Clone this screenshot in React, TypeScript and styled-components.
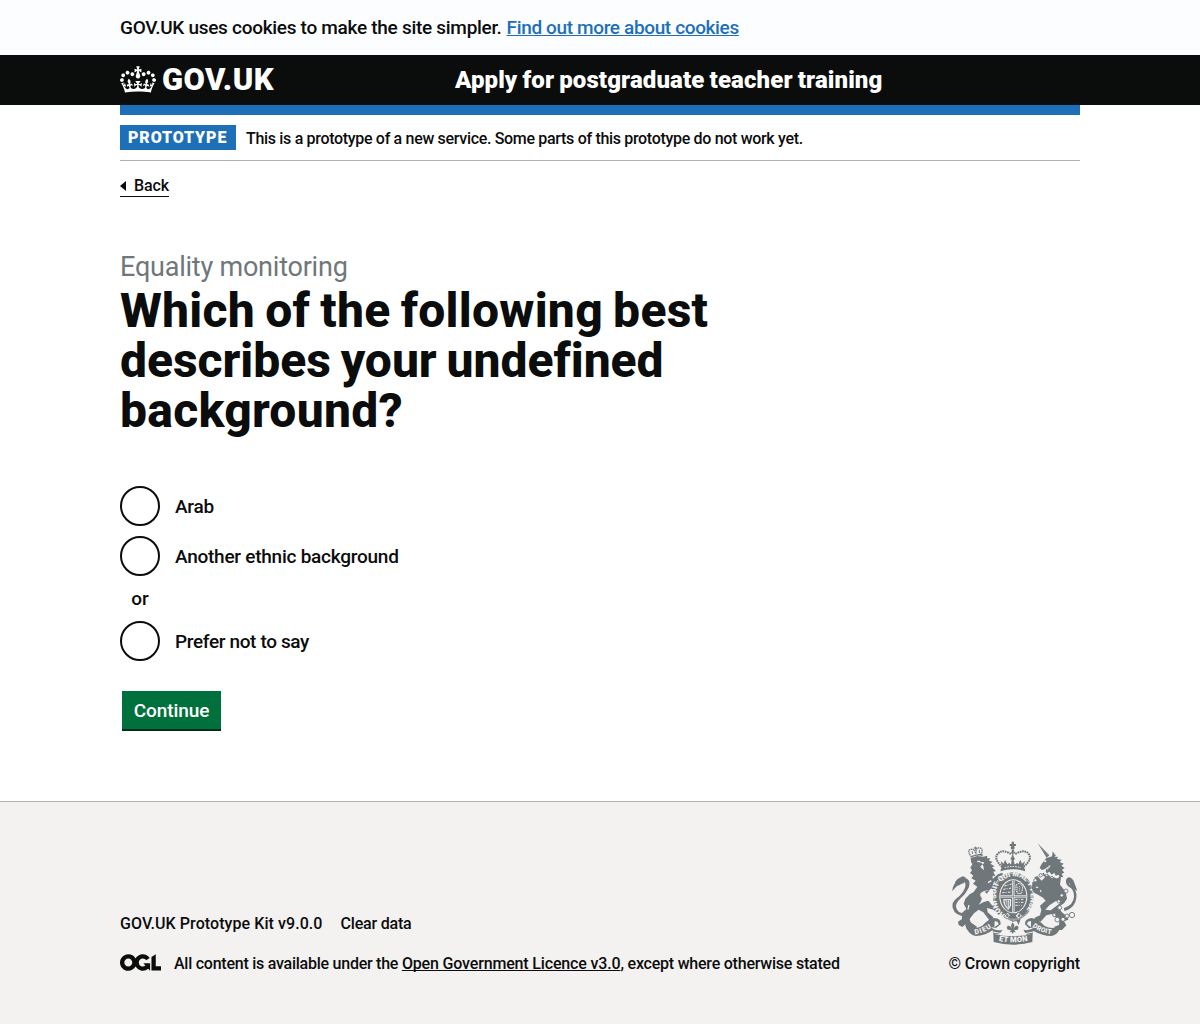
import React from "react";
import styled, { createGlobalStyle } from "styled-components";

const GlobalStyle = createGlobalStyle`
  * { box-sizing: border-box; }
  body {
    margin: 0;
    background: #f3f2f1;
    color: #0b0c0c;
    font-family: Roboto, "Liberation Sans", sans-serif;
    font-weight: 480;
  }
`;

const Page = styled.div`
  display: flex;
  flex-direction: column;
  min-height: 1024px;
  background: #fff;
`;

const Container = styled.div`
  width: 960px;
  margin: 0 auto;
`;

/* Run of copy with its own tracking */
const Copy = styled.span<{ $track?: number }>`
  letter-spacing: ${(p) => p.$track ?? 0}px;
`;

const CookieBanner = styled.div`
  padding: 15px 0;
  background: #fbfdfe;
  font-size: 19px;
  line-height: 25px;
`;

const CookieText = styled.p`
  display: flex;
  gap: 5px;
  margin: 0;
`;

const Link = styled.a<{ $track?: number }>`
  color: #1d70b8;
  letter-spacing: ${(p) => p.$track ?? 0}px;
  text-decoration: underline;
  text-decoration-thickness: 1px;
  text-decoration-skip-ink: none;
  text-underline-offset: 1px;
`;

const Header = styled.header`
  height: 50px;
  background: #0b0c0c;
  color: #fff;
`;

const HeaderInner = styled(Container)`
  display: grid;
  grid-template-columns: 335px 1fr;
  align-items: center;
  height: 50px;
`;

const Logotype = styled.a`
  display: flex;
  align-items: center;
  gap: 6px;
  color: #fff;
  font-size: 31px;
  font-weight: 900;
  line-height: 50px;
  letter-spacing: 0.45px;
`;

const ServiceName = styled.a`
  color: #fff;
  font-size: 24px;
  font-weight: 900;
  line-height: 50px;
  letter-spacing: 0.11px;
  word-spacing: -1px;
`;

const Main = styled(Container)`
  flex: 1;
  border-top: 10px solid #1d70b8;
`;

const PhaseBanner = styled.div`
  display: flex;
  align-items: center;
  gap: 10px;
  height: 46px;
  border-bottom: 1px solid #b1b4b6;
  font-size: 16px;
  line-height: 25px;
`;

const PhaseText = styled(Copy)`
  padding-top: 1px;
`;

const Tag = styled.strong`
  width: 116px;
  height: 25px;
  padding-left: 8px;
  background: #1d70b8;
  color: #fff;
  font-size: 16px;
  font-weight: 900;
  letter-spacing: 0.9px;
`;

const BackLink = styled.a`
  display: inline-flex;
  align-items: center;
  gap: 8px;
  height: 22px;
  margin-top: 14px;
  border-bottom: 1px solid #0b0c0c;
  font-size: 16px;
  line-height: 20px;
  letter-spacing: -0.1px;
  vertical-align: top;
`;

const Arrow = styled.span`
  border: 5px solid transparent;
  border-left-width: 0;
  border-right: 6px solid #0b0c0c;
`;

const Content = styled.div`
  width: 630px;
  padding-top: 55px;
`;

const Caption = styled.span`
  display: block;
  color: #6f777b;
  font-size: 27px;
  font-weight: 450;
  line-height: 30px;
  letter-spacing: -0.22px;
`;

const Title = styled.h1`
  display: flex;
  flex-direction: column;
  margin: 4px 0 50px;
  font-size: 48px;
  font-weight: 850;
  line-height: 50px;
  word-spacing: -2px;
`;

const TitleLine = styled(Copy)`
  display: block;
  height: 50px;
`;

const Radios = styled.div`
  display: flex;
  flex-direction: column;
  font-size: 19px;
  line-height: 40px;
`;

const Radio = styled.label<{ $gap?: number }>`
  display: flex;
  gap: 15px;
  height: 40px;
  margin-bottom: ${(p) => p.$gap ?? 0}px;
  line-height: 42px;
`;

const Circle = styled.span`
  width: 40px;
  height: 40px;
  border: 2px solid #0b0c0c;
  border-radius: 50%;
`;

const Divider = styled.div`
  width: 40px;
  margin-bottom: 10px;
  line-height: 25px;
  text-align: center;
`;

const Button = styled.button`
  width: 99px;
  height: 38px;
  margin: 30px 0 0 2px;
  padding: 0;
  border: 0;
  background: #00703c;
  box-shadow: 0 2px 0 #002d18;
  color: #fff;
  font: 500 19px/40px Roboto, "Liberation Sans", sans-serif;
  letter-spacing: -0.1px;
`;

const Footer = styled.footer`
  height: 223px;
  border-top: 1px solid #b1b4b6;
  background: #f3f2f1;
  font-size: 16px;
  line-height: 20px;
`;

const FooterInner = styled(Container)`
  display: flex;
  justify-content: space-between;
  padding-top: 38px;
`;

const FooterMeta = styled.div`
  display: flex;
  flex-direction: column;
  justify-content: flex-end;
  gap: 20px;
`;

const FooterRow = styled.div<{ $gap: number }>`
  display: flex;
  align-items: flex-start;
  gap: ${(p) => p.$gap}px;
`;

const FooterLink = styled(Link)`
  color: #0b0c0c;
`;

const Copyright = styled.div`
  display: flex;
  flex-direction: column;
  align-items: flex-end;
  gap: 8px;
`;

const Drawing = styled.svg`
  display: block;
  flex: none;
`;

const CrownDrawing = styled(Drawing)`
  margin-bottom: 2px;
`;

function Crown() {
  return (
    <CrownDrawing width="36" height="27" viewBox="0 0 132 97" fill="#fff">
      <path d="M25 30.2c3.5 1.5 7.7-.2 9.1-3.7 1.5-3.6-.2-7.8-3.9-9.2-3.6-1.4-7.6.3-9.1 3.9-1.4 3.5.3 7.5 3.9 9zM9 39.5c3.6 1.5 7.8-.2 9.2-3.7 1.5-3.6-.2-7.8-3.9-9.1-3.6-1.5-7.6.2-9.1 3.8-1.4 3.5.3 7.5 3.8 9zM4.4 57.2c3.5 1.5 7.7-.2 9.1-3.8 1.5-3.6-.2-7.7-3.9-9.1-3.5-1.5-7.6.3-9.1 3.8-1.4 3.5.3 7.6 3.9 9.1zm38.3-21.4c3.5 1.5 7.7-.2 9.1-3.8 1.5-3.6-.2-7.7-3.9-9.1-3.6-1.5-7.6.3-9.1 3.8-1.3 3.6.4 7.7 3.9 9.1zm64.4-5.6c-3.6 1.5-7.8-.2-9.1-3.7-1.5-3.6.2-7.8 3.8-9.2 3.6-1.4 7.7.3 9.2 3.9 1.3 3.5-.4 7.5-3.9 9zm15.9 9.3c-3.6 1.5-7.7-.2-9.1-3.7-1.5-3.6.2-7.8 3.7-9.1 3.6-1.5 7.7.2 9.2 3.8 1.5 3.5-.3 7.5-3.8 9zm4.7 17.7c-3.6 1.5-7.8-.2-9.2-3.8-1.5-3.6.2-7.7 3.9-9.1 3.6-1.5 7.7.3 9.2 3.8 1.3 3.5-.4 7.6-3.9 9.1zM89.3 35.8c-3.6 1.5-7.8-.2-9.2-3.8-1.4-3.6.2-7.7 3.9-9.1 3.6-1.5 7.7.3 9.2 3.8 1.4 3.6-.3 7.7-3.9 9.1zM69.7 17.7l8.9 4.7V9.3l-8.9 2.8c-.2-.3-.5-.6-.9-.9L72.4 0H59.6l3.5 11.2c-.3.3-.6.5-.9.9l-8.8-2.8v13.1l8.8-4.7c.3.3.6.7.9.9l-5 15.4v.1c-.2.8-.4 1.6-.4 2.4 0 4.1 3.1 7.5 7 8.1h.2c.3 0 .7.1 1 .1.4 0 .7 0 1-.1h.2c4-.6 7.1-4.1 7.1-8.1 0-.8-.1-1.7-.4-2.4V34l-5.1-15.4c.4-.2.7-.6 1-.9zM66 92.8c16.9 0 32.8 1.1 47.1 3.2 4-16.9 8.9-26.7 14-33.5l-9.6-3.4c1 4.9 1.1 7.2 0 10.2-1.5-1.4-3-4.3-4.2-8.7L108.6 76c2.8-2 5-3.2 7.5-3.3-4.4 9.4-10 11.9-13.6 11.2-4.3-.8-6.3-4.6-5.6-7.9 1-4.7 5.7-5.9 8-.5 4.3-8.7-3-11.4-7.6-8.8 7.1-7.2 7.9-13.5 2.1-21.1-8 6.1-8.1 12.3-4.5 20.8-4.7-5.4-12.1-2.5-9.5 6.2 3.4-5.2 7.9-2 7.2 3.1-.6 4.3-6.4 7.8-13.5 7.2-10.3-.9-10.9-8-11.2-13.8 2.5-.5 7.1 1.8 11 7.3L80.2 60c-4.1 4.4-8 5.3-12.3 5.4 1.4-4.4 8-11.6 8-11.6H55.5s6.4 7.2 7.9 11.6c-4.2-.1-8-1-12.3-5.4l1.4 16.4c3.9-5.5 8.5-7.7 10.9-7.3-.3 5.8-.9 12.8-11.1 13.8-7.2.6-12.9-2.9-13.5-7.2-.7-5 3.8-8.3 7.1-3.1 2.7-8.7-4.6-11.6-9.4-6.2 3.7-8.5 3.6-14.7-4.6-20.8-5.8 7.6-5 13.9 2.2 21.1-4.7-2.6-11.9.1-7.7 8.8 2.3-5.5 7.1-4.2 8.1.5.7 3.3-1.3 7.1-5.7 7.9-3.5.7-9-1.8-13.5-11.2 2.5.1 4.7 1.3 7.5 3.3l-4.7-15.4c-1.2 4.4-2.7 7.2-4.3 8.7-1.1-3-.9-5.3 0-10.2l-9.5 3.4c5 6.9 9.9 16.7 14 33.5 14.8-2.1 30.8-3.2 47.7-3.2z" />
    </CrownDrawing>
  );
}

function LicenceLogo() {
  return (
    <Drawing width="41" height="17" viewBox="0 0 483.2 195.7" fill="#0b0c0c">
      <path d="M421.5 142.8V.1l-50.7 32.3v161.1h112.4v-50.7zm-122.3-9.6A47.12 47.12 0 0 1 221 97.8c0-26 21.1-47.1 47.1-47.1 16.7 0 31.4 8.7 39.7 21.8l42.7-27.2A97.63 97.63 0 0 0 268.1 0c-36.5 0-68.3 20.1-85.1 49.7A98 98 0 0 0 97.8 0C43.9 0 0 43.9 0 97.8s43.9 97.8 97.8 97.8c36.5 0 68.3-20.1 85.1-49.7a97.76 97.76 0 0 0 149.6 25.4l19.4 22.2h3v-87.8h-80l24.3 27.5zM97.8 145c-26 0-47.1-21.1-47.1-47.1s21.1-47.1 47.1-47.1 47.1 21.1 47.1 47.1S123.8 145 97.8 145" />
    </Drawing>
  );
}

const arms = "#6f777b";
const paper = "#f3f2f1";

const MottoText = styled.text`
  font-family: Roboto, sans-serif;
  font-weight: 900;
  fill: #f3f2f1;
`;

function CoatOfArms() {
  return (
    <Drawing width="130" height="106" viewBox="30 15 390 318" fill={arms}>
      <defs>
        <path id="garter" d="M196 238C160 220 158 146 196 131C212 122 229 122 245 131C281 148 280 216 247 238" />
        <path id="mottoLeft" d="M105 298Q138 293 160 273" />
        <path id="mottoMid" d="M172 317Q219 327 268 317" />
        <path id="mottoRight" d="M277 274Q300 294 338 298" />
      </defs>

      {/* lion */}
      <path d="M91 63L126 55L129 63Q110 59 92 68z" />
      <g fill="none" stroke={arms} strokeWidth="3">
        <path d="M91 61Q80 44 94 43Q104 41 108 58Q107 37 117 39Q130 38 125 54" strokeWidth="4" strokeDasharray="4 1.5" />
        <path d="M106 35v10M101 39h10M98 57l-2-8M118 54v-9" />
      </g>
      <path d="M92 69L112 63L130 65L142 62L141 70L151 70L147 77L158 80L151 86L164 94L156 97L168 108L160 110L166 124L158 122L158 132L174 118L187 113L190 119L178 125L184 132L172 136L164 150L172 160L165 172L153 160L140 177L143 194L156 211L171 209L186 235L176 240L161 224L141 219L143 232L160 247L153 262L145 252L130 232L116 224L102 235L89 252L92 262L111 275L103 287L80 282L76 268L67 276L56 270L54 260L66 252L65 235L79 222L71 206L76 191L89 178L101 171L112 155L99 146L107 137L94 130L100 122L90 114L96 106L91 98L97 88L93 80z" />
      <path d="M78 236Q49 236 48 214Q48 204 60 192Q77 177 86 158Q95 132 73 128Q51 124 46 144Q36 156 37 168Q47 152 60 150Q67 143 68 138Q80 142 75 158Q68 176 50 190Q34 202 38 219Q45 243 78 244z" />
      <path d="M47 139L67 124L77 127L71 145L53 150L37 168z" />
      <g fill={paper}>
        <path d="M112 77h7l4 4h8l1 4-5 4-1-5-8-2-7-1zM121 94l6-5 3 4 2 12-8-6z" />
        <path d="M121 175Q132 165 147 166L134 170L142 178L150 198L141 198Q131 200 116 209Q132 190 121 184z" />
        <path d="M143 141l10-6 2 4-10 6zM85 210l4 0-4 15-3-2z" />
      </g>

      {/* royal crown */}
      <circle cx="218" cy="38" r="6" />
      <path d="M215 20h7v7h6v6h-6v5h-7v-5h-6v-6h6z" />
      <g fill="none" stroke={arms}>
        <path d="M187 96Q161 72 172 58Q183 43 205 53Q216 60 219 46Q223 60 234 53Q256 43 267 58Q277 74 250 96" strokeWidth="6" strokeDasharray="5 2" />
        <path d="M218 46V71" strokeWidth="5" strokeDasharray="4 2" />
        <path d="M183 104Q218 92 254 104M188 94Q218 84 249 94" strokeWidth="4" />
      </g>
      <path d="M181 109Q218 96 256 109L252 96Q218 84 185 96z" />
      <path d="M186 97L182 78L191 86L195 74L202 88L208 83L213 90L215 75L211 72L218 61L225 72L221 76L224 90L231 83L235 88L241 74L246 86L255 78L250 97L218 90z" />
      <path d="M194 98Q218 91 243 98" fill="none" stroke={paper} strokeWidth="3" strokeDasharray="5 3" />

      {/* garter and shield */}
      <ellipse cx="220" cy="184" rx="61" ry="72" />
      <ellipse cx="220" cy="184" rx="58" ry="69" fill="none" stroke={paper} strokeWidth="1.5" />
      <ellipse cx="220" cy="184" rx="42" ry="51" fill={paper} />
      <ellipse cx="220" cy="184" rx="39" ry="48" />
      <MottoText fontSize="22" textLength="285" lengthAdjust="spacing">
        <textPath href="#garter">HONI SOIT QUI MAL Y PENSE</textPath>
      </MottoText>
      <path d="M181 184H259M220 137V231" stroke={paper} strokeWidth="7" />
      <path d="M181 184H259M220 137V231" stroke={arms} strokeWidth="2" />
      <g stroke={paper} strokeWidth="3" strokeDasharray="7 3 3 4" fill="none">
        <path d="M193 153l22-6M190 163l25-4M187 173l28-2M226 193h26M226 202h25M226 211h19" />
      </g>
      <path d="M228 150l11-6 9 11-3 20-12 1-5-10z" fill="none" stroke={paper} strokeWidth="3" strokeDasharray="5 2" />
      <path d="M233 155v16M239 153v18" stroke={paper} strokeWidth="2" strokeDasharray="4 2" />
      <path d="M190 192h23v20l-8 13q-17-15-15-33z" fill={paper} />
      <path d="M194 196Q197 211 205 219M198 194v17M203 194v20M208 194v20" stroke={arms} strokeWidth="2.5" fill="none" />
      <path d="M193 244l10-11 7 8-8 9zM227 243l8-10 11 9-11 8z" fill={paper} />
      <circle cx="202" cy="242" r="4" />
      <circle cx="237" cy="242" r="4" />
      <path d="M202 252Q220 261 242 251L236 270L230 258L218 260z" />

      {/* unicorn */}
      <path d="M293 25L328 61L320 68z" />
      <path d="M296 30l29 32" stroke={paper} strokeWidth="1.5" strokeDasharray="1.5 4" />
      <path d="M319 69L337 64L339 54L345 66L354 65L351 72L365 74L359 81L371 86L364 92L374 99L366 104L373 113L365 116L370 127L363 126L360 149L377 170L381 191L372 205L355 216L365 231L383 246L385 254L372 259L379 271L366 285L347 285L343 275L357 270L358 257L336 237L319 241L302 260L285 257L284 248L300 241L304 225L300 212L317 197L309 188L290 177L286 164L276 158L277 142L289 135L283 127L292 123L305 137L315 127L306 117L318 109L318 101L305 105L299 98L305 87z" />
      <path d="M337 66L338 49L348 63z" />
      <path d="M289 177Q274 170 276 155L286 145L297 151L288 157L293 166L309 164L309 174z" />
      <path d="M371 220Q401 209 402 185Q403 162 386 155Q374 145 379 132Q388 120 400 136L410 164L399 154L391 140Q382 145 392 150Q412 162 409 188Q407 216 374 229z" />
      <path d="M385 141L393 132L402 143L412 168L397 158z" />
      <g fill={paper}>
        <path d="M312 77l7-2-1 6-6 1zM325 93l7-2-7 12zM316 100l8-4-1 8z" />
        <path d="M349 197L360 205L346 215L332 226L316 224L328 211z" />
        <path d="M307 111l7-4 7 8 7-5 7 9 8-6 4 9 9-3 2 7-7 6-7-4-9 2-8-8-9 2z" />
      </g>
      <path d="M309 115l7 5 7-1 6 7 8-1 8 7 11-1" fill="none" stroke={arms} strokeWidth="4.5" strokeDasharray="4 2" />
      <g fill={paper} stroke={arms} strokeWidth="2.7">
        <circle cx="302" cy="121" r="5" />
        <circle cx="286" cy="136" r="5" />
        <circle cx="291" cy="157" r="4" />
        <circle cx="302" cy="168" r="4" />
        <circle cx="365" cy="181" r="5" />
        <circle cx="378" cy="168" r="6" />
        <circle cx="356" cy="199" r="5" />
        <circle cx="359" cy="218" r="6" />
        <circle cx="343" cy="240" r="5" />
        <circle cx="352" cy="254" r="7" />
        <circle cx="369" cy="253" r="6" />
        <circle cx="381" cy="243" r="6" />
        <circle cx="396" cy="240" r="8" />
      </g>

      {/* motto scroll */}
      <path d="M75 270Q101 287 126 273Q143 254 162 249Q183 249 182 268L168 279L153 276Q167 290 188 284L178 298L159 296L158 285Q138 302 107 303Q87 301 75 270z" />
      <path d="M364 271Q338 287 313 272Q294 252 274 249Q254 251 255 268L267 280L283 277Q270 289 250 284L259 299L278 297L280 287Q304 302 335 303Q355 300 364 271z" />
      <path d="M164 259q10-2 12 9l-13 9zM273 258q-11 0-12 10l12 9z" fill={paper} />
      <path d="M160 296Q220 311 278 296L277 321Q219 337 161 321z" />
      <path d="M159 291Q220 307 279 291" fill="none" stroke={paper} strokeWidth="3" />
      <MottoText fontSize="21"><textPath href="#mottoLeft" textLength="54">DIEU</textPath></MottoText>
      <MottoText fontSize="23"><textPath href="#mottoMid" startOffset="4" textLength="88">ET MON</textPath></MottoText>
      <MottoText fontSize="20"><textPath href="#mottoRight" textLength="62">DROIT</textPath></MottoText>
      <path d="M218 262l5 8-2 11q4-12 12-8 5 4 0 11l-11 2 6 6-7-1-3 6-3-6-7 1 6-6-11-2q-5-7 0-11 8-4 12 8l-2-11z" />
    </Drawing>
  );
}

export default function App() {
  return (
    <Page>
      <GlobalStyle />
      <CookieBanner>
        <Container>
          <CookieText>
            <Copy $track={-0.29}>GOV.UK uses cookies to make the site simpler.</Copy>
            <Link $track={-0.36}>Find out more about cookies</Link>
          </CookieText>
        </Container>
      </CookieBanner>
      <Header>
        <HeaderInner>
          <Logotype><Crown />GOV.UK</Logotype>
          <ServiceName>Apply for postgraduate teacher training</ServiceName>
        </HeaderInner>
      </Header>
      <Main as="main">
        <PhaseBanner>
          <Tag>PROTOTYPE</Tag>
          <PhaseText $track={-0.32}>This is a prototype of a new service. Some parts of this prototype do not work yet.</PhaseText>
        </PhaseBanner>
        <BackLink><Arrow />Back</BackLink>
        <Content>
          <Caption>Equality monitoring</Caption>
          <Title>
            <TitleLine $track={0.26}>Which of the following best</TitleLine>
            <TitleLine $track={-0.04}>describes your undefined</TitleLine>
            <TitleLine $track={0.28}>background?</TitleLine>
          </Title>
          <Radios>
            <Radio $gap={10}><Circle /><Copy $track={-0.25}>Arab</Copy></Radio>
            <Radio $gap={10}><Circle /><Copy $track={-0.25}>Another ethnic background</Copy></Radio>
            <Divider>or</Divider>
            <Radio><Circle /><Copy $track={-0.36}>Prefer not to say</Copy></Radio>
          </Radios>
          <Button>Continue</Button>
        </Content>
      </Main>
      <Footer>
        <FooterInner>
          <FooterMeta>
            <FooterRow $gap={18}>
              <Copy $track={0.07}>GOV.UK Prototype Kit v9.0.0</Copy>
              <Copy $track={-0.2}>Clear data</Copy>
            </FooterRow>
            <FooterRow $gap={13}>
              <LicenceLogo />
              <span>
                <Copy $track={-0.25}>All content is available under the </Copy>
                <FooterLink $track={-0.16}>Open Government Licence v3.0</FooterLink>
                <Copy $track={-0.22}>, except where otherwise stated</Copy>
              </span>
            </FooterRow>
          </FooterMeta>
          <Copyright>
            <CoatOfArms />
            <Copy $track={-0.12}>© Crown copyright</Copy>
          </Copyright>
        </FooterInner>
      </Footer>
    </Page>
  );
}
